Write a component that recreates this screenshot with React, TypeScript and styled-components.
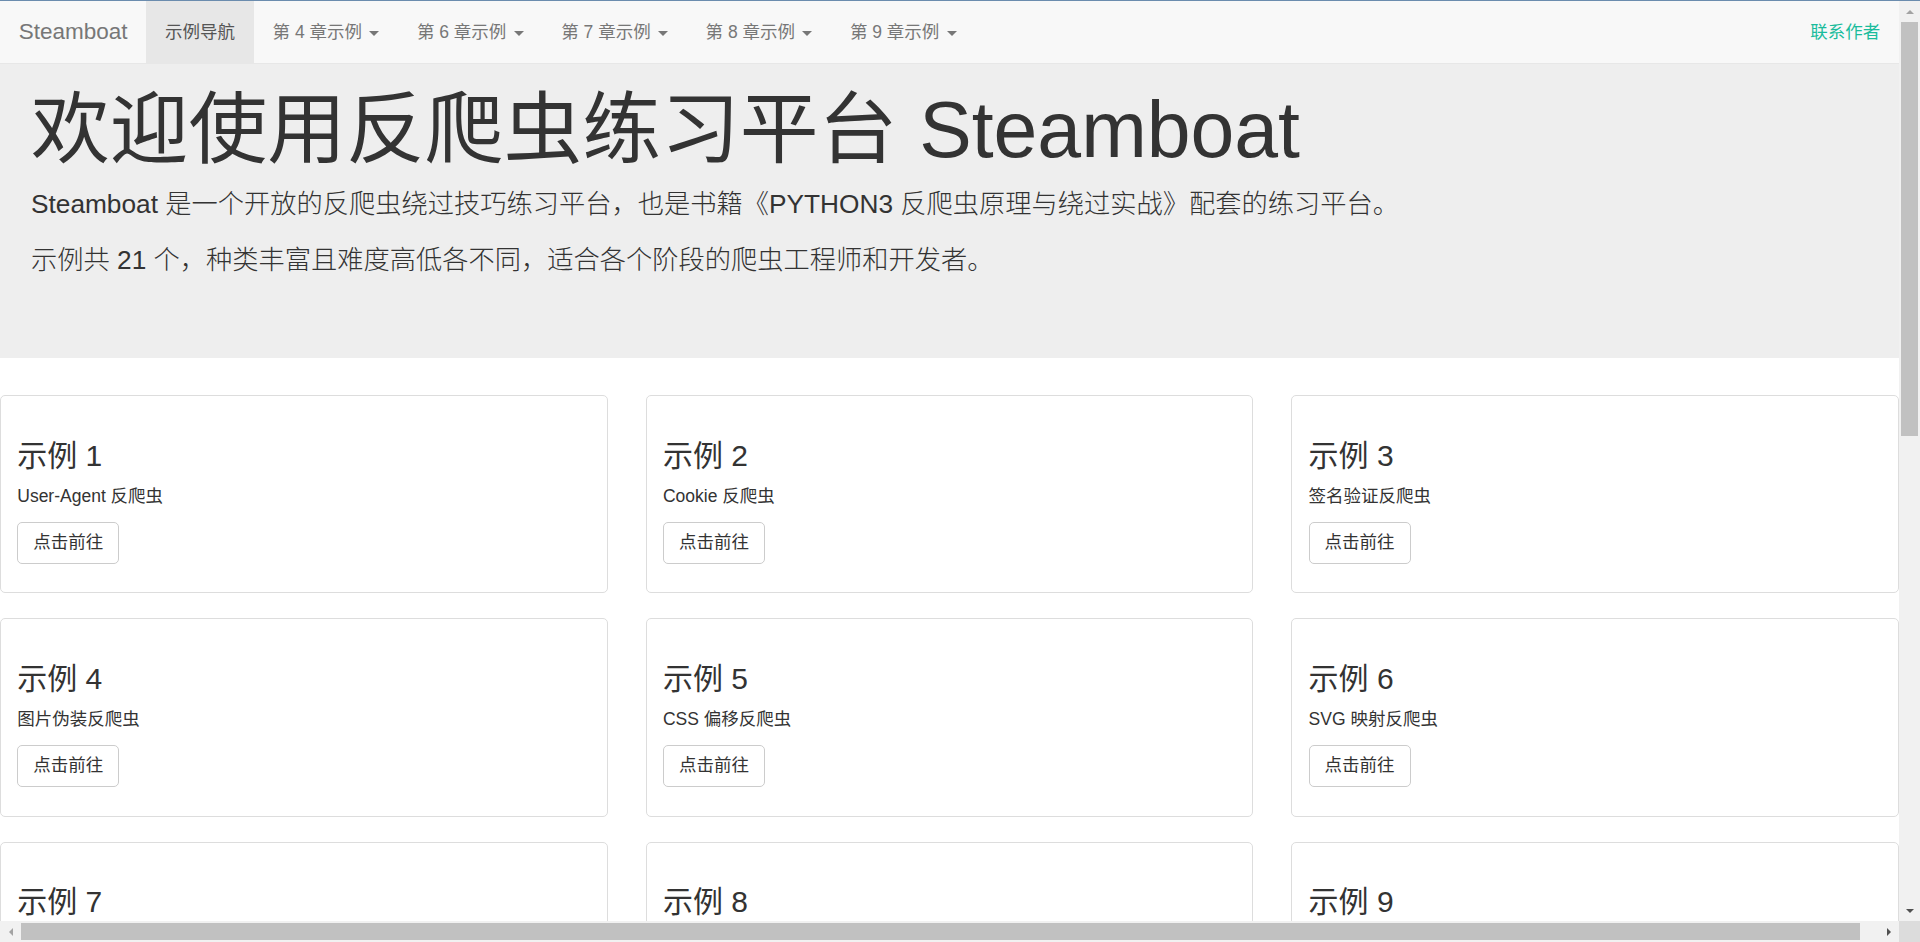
import React from 'react';
import styled, { createGlobalStyle } from 'styled-components';

const GlobalStyle = createGlobalStyle`
  html, body {
    margin: 0;
    padding: 0;
    width: 1920px;
    height: 942px;
    overflow: hidden;
    background: #fff;
  }
  * { box-sizing: border-box; }
  #root { width: 1920px; height: 942px; }
`;

const Frame = styled.div`
  display: grid;
  grid-template-columns: 1899px 21px;
  grid-template-rows: 1px 920px 21px;
  width: 1920px;
  height: 942px;
  font-family: "Liberation Sans", "Noto Sans CJK SC", sans-serif;
  font-size: 17.5px;
  line-height: 1.42857;
  color: #333;
`;

const WindowEdge = styled.div`
  grid-column: 1 / -1;
  background: #6b8cae;
`;

const Viewport = styled.div`
  overflow: hidden;
  background: #fff;
`;

const Navbar = styled.nav`
  display: flex;
  align-items: stretch;
  height: 63px;
  background: #f8f8f8;
  border-bottom: 1px solid #e7e7e7;
`;

const Brand = styled.a`
  padding: 0 18.75px;
  font-size: 22.5px;
  line-height: 62px;
  color: #777;
  text-decoration: none;
  white-space: nowrap;
`;

const NavItem = styled.a<{ $active?: boolean; $accent?: boolean }>`
  padding: 0 18.75px;
  font-size: 17.5px;
  line-height: 62px;
  white-space: nowrap;
  text-decoration: none;
  color: ${(p) => (p.$accent ? '#1abc9c' : p.$active ? '#555' : '#777')};
  background: ${(p) => (p.$active ? '#e7e7e7' : 'transparent')};
`;

const Caret = styled.span`
  display: inline-block;
  width: 0;
  height: 0;
  margin-left: 2.5px;
  vertical-align: middle;
  border-top: 5px solid currentColor;
  border-left: 5px solid transparent;
  border-right: 5px solid transparent;
`;

const Spacer = styled.div`
  flex: 1;
`;

const Jumbotron = styled.section`
  background: #eee;
  padding: 22.5px 31px 59.5px;
`;

const Headline = styled.h1`
  margin: 0 0 12.5px;
  font-size: 78.75px;
  line-height: 1.1;
  font-weight: 400;
  color: #333;
  white-space: nowrap;
`;

const Lead = styled.p`
  margin: 0 0 18.75px;
  font-size: 26.25px;
  line-height: 37.5px;
  font-weight: 200;
  white-space: nowrap;
`;

const CardGrid = styled.div`
  display: grid;
  grid-template-columns: repeat(3, 1fr);
  column-gap: 38px;
  row-gap: 25px;
  padding-top: 37.5px;
`;

const Thumbnail = styled.div`
  border: 1px solid #ddd;
  border-radius: 5px;
  padding: 5px;
  background: #fff;
`;

const Caption = styled.div`
  padding: 11.25px;
`;

const CardTitle = styled.h3`
  margin: 26.25px 0 12.5px;
  font-size: 30px;
  line-height: 1.1;
  font-weight: 400;
`;

const CardText = styled.p`
  margin: 0 0 12.5px;
  line-height: 25px;
`;

const ButtonRow = styled.div`
  display: flex;
  margin-bottom: 12.5px;
`;

const Button = styled.a`
  display: inline-block;
  padding: 7.5px 15px;
  border: 1px solid #ccc;
  border-radius: 5px;
  background: #fff;
  color: #333;
  font-size: 17.5px;
  line-height: 25px;
  text-decoration: none;
  white-space: nowrap;
`;

const VScroll = styled.div`
  display: flex;
  flex-direction: column;
  background: #f1f1f1;
`;

const HScroll = styled.div`
  display: flex;
  background: #f1f1f1;
`;

const ArrowButton = styled.div`
  flex: none;
  width: 21px;
  height: 21px;
  display: flex;
  align-items: center;
  justify-content: center;
`;

const VTrack = styled.div`
  flex: 1;
  padding: 0 2px;
`;

const VThumb = styled.div`
  height: 414px;
  background: #c1c1c1;
`;

const HTrack = styled.div`
  flex: 1;
  padding: 2px 0;
`;

const HThumb = styled.div`
  width: 1839px;
  height: 100%;
  background: #c1c1c1;
`;

const Corner = styled.div`
  background: #dcdcdc;
`;

type Dir = 'up' | 'down' | 'left' | 'right';

const Arrow: React.FC<{ dir: Dir; dim?: boolean }> = ({ dir, dim }) => {
  const pts: Record<Dir, string> = {
    up: '1,7 5,3 9,7',
    down: '1,3 5,7 9,3',
    left: '7,1 3,5 7,9',
    right: '3,1 7,5 3,9',
  };
  return (
    <ArrowButton>
      <svg width="10" height="10" viewBox="0 0 10 10">
        <polygon points={pts[dir]} fill={dim ? '#a3a3a3' : '#505050'} />
      </svg>
    </ArrowButton>
  );
};

const chapters = ['4', '6', '7', '8', '9'];

const examples = [
  { n: 1, text: 'User-Agent 反爬虫' },
  { n: 2, text: 'Cookie 反爬虫' },
  { n: 3, text: '签名验证反爬虫' },
  { n: 4, text: '图片伪装反爬虫' },
  { n: 5, text: 'CSS 偏移反爬虫' },
  { n: 6, text: 'SVG 映射反爬虫' },
  { n: 7, text: '字体反爬虫' },
  { n: 8, text: '文本混淆反爬虫' },
  { n: 9, text: '验证码反爬虫' },
];

export default function App() {
  return (
    <>
      <GlobalStyle />
      <Frame>
        <WindowEdge />
        <Viewport>
          <Navbar>
            <Brand href="#">Steamboat</Brand>
            <NavItem href="#" $active>
              示例导航
            </NavItem>
            {chapters.map((c) => (
              <NavItem href="#" key={c}>
                {`第 ${c} 章示例 `}
                <Caret />
              </NavItem>
            ))}
            <Spacer />
            <NavItem href="#" $accent>
              联系作者
            </NavItem>
          </Navbar>
          <Jumbotron>
            <Headline>欢迎使用反爬虫练习平台 Steamboat</Headline>
            <Lead>Steamboat 是一个开放的反爬虫绕过技巧练习平台，也是书籍《PYTHON3 反爬虫原理与绕过实战》配套的练习平台。</Lead>
            <Lead>示例共 21 个，种类丰富且难度高低各不同，适合各个阶段的爬虫工程师和开发者。</Lead>
          </Jumbotron>
          <CardGrid>
            {examples.map((e) => (
              <Thumbnail key={e.n}>
                <Caption>
                  <CardTitle>示例 {e.n}</CardTitle>
                  <CardText>{e.text}</CardText>
                  <ButtonRow>
                    <Button href="#">点击前往</Button>
                  </ButtonRow>
                </Caption>
              </Thumbnail>
            ))}
          </CardGrid>
        </Viewport>
        <VScroll>
          <Arrow dir="up" dim />
          <VTrack>
            <VThumb />
          </VTrack>
          <Arrow dir="down" />
        </VScroll>
        <HScroll>
          <Arrow dir="left" dim />
          <HTrack>
            <HThumb />
          </HTrack>
          <Arrow dir="right" />
        </HScroll>
        <Corner />
      </Frame>
    </>
  );
}
